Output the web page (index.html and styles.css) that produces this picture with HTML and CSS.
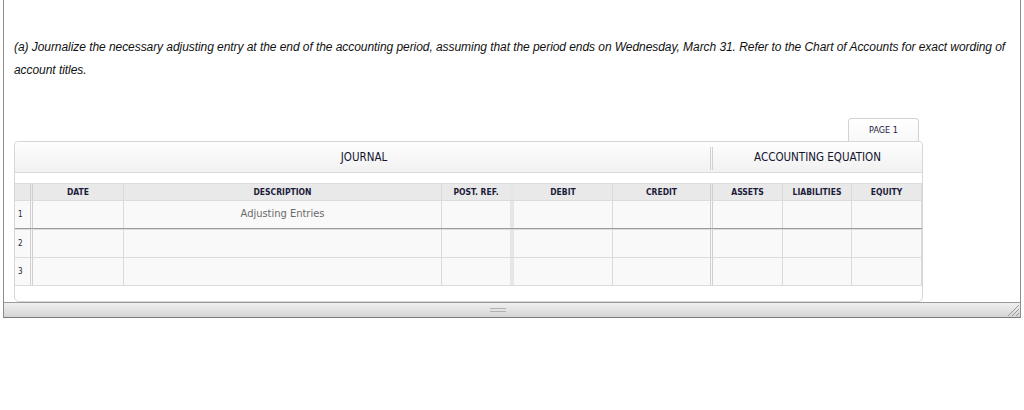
FILE: index.html
```html
<!DOCTYPE html>
<html>
<head>
<meta charset="utf-8">
<link rel="stylesheet" href="styles.css">
</head>
<body>
<div class="frame">
  <p class="question">(a) Journalize the necessary adjusting entry at the end of the accounting period, assuming that the period ends on Wednesday, March 31. Refer to the Chart of Accounts for exact wording of account titles.</p>
  <div class="journal-wrap">
    <div class="tabs"><div class="tab">PAGE 1</div></div>
    <div class="sheet">
      <div class="sheet-head">
        <div class="h-journal">JOURNAL</div>
        <div class="h-eq">ACCOUNTING EQUATION</div>
      </div>
      <div class="spacer"></div>
      <div class="row colhead">
        <div class="c c-num"></div>
        <div class="c">DATE</div>
        <div class="c">DESCRIPTION</div>
        <div class="c c-post">POST. REF.</div>
        <div class="c">DEBIT</div>
        <div class="c c-credit">CREDIT</div>
        <div class="c">ASSETS</div>
        <div class="c">LIABILITIES</div>
        <div class="c">EQUITY</div>
      </div>
      <div class="row data first">
        <div class="c c-num">1</div>
        <div class="c"></div>
        <div class="c c-desc">Adjusting Entries</div>
        <div class="c c-post"></div>
        <div class="c"></div>
        <div class="c c-credit"></div>
        <div class="c"></div>
        <div class="c"></div>
        <div class="c"></div>
      </div>
      <div class="row data">
        <div class="c c-num">2</div>
        <div class="c"></div>
        <div class="c c-desc"></div>
        <div class="c c-post"></div>
        <div class="c"></div>
        <div class="c c-credit"></div>
        <div class="c"></div>
        <div class="c"></div>
        <div class="c"></div>
      </div>
      <div class="row data">
        <div class="c c-num">3</div>
        <div class="c"></div>
        <div class="c c-desc"></div>
        <div class="c c-post"></div>
        <div class="c"></div>
        <div class="c c-credit"></div>
        <div class="c"></div>
        <div class="c"></div>
        <div class="c"></div>
      </div>
      <div class="foot-space"></div>
    </div>
  </div>
  <div class="statusbar">
    <span class="handle"></span>
    <svg class="grip" width="12" height="12" viewBox="0 0 12 12">
      <line x1="12" y1="1" x2="1" y2="12" stroke="#9a9a9a" stroke-width="1"/>
      <line x1="12" y1="5" x2="5" y2="12" stroke="#9a9a9a" stroke-width="1"/>
      <line x1="12" y1="9" x2="9" y2="12" stroke="#9a9a9a" stroke-width="1"/>
    </svg>
  </div>
</div>
</body>
</html>
```

FILE: styles.css
```css
html, body {
  margin: 0;
  padding: 0;
  background: #ffffff;
}

.frame {
  margin-left: 3px;
  width: 1016px;
  border-left: 1px solid #8c8c8c;
  border-right: 1px solid #8c8c8c;
}

.question {
  margin: 0;
  padding: 36px 2px 0 10px;
  font-family: "Liberation Sans", Arial, sans-serif;
  font-style: italic;
  font-size: 12px;
  letter-spacing: -0.06px;
  line-height: 23px;
  color: #111111;
}

.journal-wrap {
  margin-top: 36px;
  margin-left: 10px;
  width: 909px;
}

.tabs {
  display: flex;
  justify-content: flex-end;
  padding-right: 4px;
}

.tab {
  width: 69px;
  height: 22px;
  border: 1px solid #d2d2d2;
  border-bottom: none;
  border-radius: 4px 4px 0 0;
  background: linear-gradient(#ffffff, #f8f8f8);
  font-family: "DejaVu Sans Condensed", "DejaVu Sans", sans-serif;
  font-stretch: condensed;
  font-size: 9px;
  line-height: 22px;
  text-align: center;
  color: #1b1b3b;
}

.sheet {
  border: 1px solid #d6d6d6;
  border-radius: 4px 4px 5px 5px;
  background: #ffffff;
}

.sheet-head {
  display: flex;
  height: 30px;
  background: linear-gradient(#fefefe, #f1f1f1);
  border-bottom: 1px solid #dadada;
  border-radius: 4px 4px 0 0;
  font-family: "DejaVu Sans Condensed", "DejaVu Sans", sans-serif;
  font-stretch: condensed;
  font-size: 11.5px;
  color: #14142e;
}

.h-journal {
  width: 698px;
  line-height: 31px;
  text-align: center;
  position: relative;
}

.h-journal::after {
  content: "";
  position: absolute;
  right: 0;
  top: 5px;
  bottom: 2px;
  width: 1px;
  border-left: 1px solid #d0d0d0;
  border-right: 1px solid #d0d0d0;
}

.h-eq {
  flex: 1;
  line-height: 31px;
  text-align: center;
}

.spacer {
  height: 10px;
}

.row {
  display: grid;
  grid-template-columns: 18px 91px 318px 72px 99px 100px 70px 69px 70px;
}

.c {
  box-sizing: border-box;
  border-right: 1px solid #dadada;
  display: flex;
  align-items: center;
  justify-content: center;
}

.c-num {
  border-right: 3px double #cfcfcf;
  justify-content: flex-start;
  padding-left: 3px;
}

.c-post {
  border-right: 4px solid #e6e6e6;
}

.c-credit {
  border-right: 3px double #cfcfcf;
}

.colhead {
  height: 16px;
  background: #e9e9e9;
  border-top: 1px solid #dcdcdc;
  font-family: "DejaVu Sans Condensed", "DejaVu Sans", sans-serif;
  font-stretch: condensed;
  font-size: 8.5px;
  font-weight: bold;
  color: #1b1b3b;
}

.data {
  height: 27px;
  background: #f9f9f9;
  border-top: 1px solid #dcdcdc;
  font-family: "DejaVu Sans Condensed", "DejaVu Sans", sans-serif;
  font-stretch: condensed;
}

.data.first {
  border-bottom: 1px solid #9c9c9c;
}

.data .c-num {
  font-size: 8px;
  color: #222233;
}

.c-desc {
  font-size: 11px;
  color: #6a6a6a;
  padding-bottom: 2px;
}

.foot-space {
  height: 15px;
  border-top: 1px solid #dcdcdc;
}

.statusbar {
  position: relative;
  height: 14px;
  border-top: 1px solid #9a9a9a;
  border-bottom: 1px solid #7a7a7a;
  background: linear-gradient(#f0f0f0, #d4d4d4);
}

.handle {
  position: absolute;
  left: 486px;
  top: 5px;
  width: 16px;
  height: 2px;
  border-top: 1px solid #b0b0b0;
  border-bottom: 1px solid #b0b0b0;
}

.grip {
  position: absolute;
  right: 1px;
  bottom: 1px;
}
```
